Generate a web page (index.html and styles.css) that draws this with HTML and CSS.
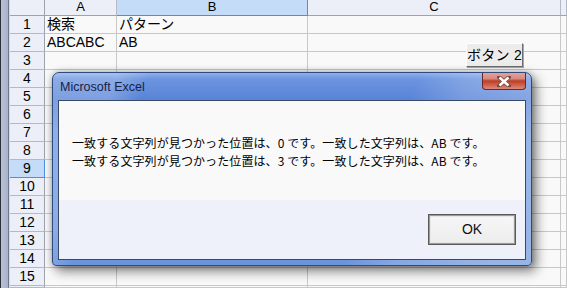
FILE: index.html
```html
<!DOCTYPE html>
<html lang="ja">
<head>
<meta charset="utf-8">
<title>Excel</title>
<link rel="stylesheet" href="styles.css">
</head>
<body>
<div class="sheet">
  <div class="strip"></div>
  <div class="hc corner"></div><div class="hc">A</div><div class="hc sel">B</div><div class="hc">C</div><div class="hc"></div>
  <div class="rh">1</div><div class="c">検索</div><div class="c">パターン</div><div class="c"></div><div class="c"></div>
  <div class="rh">2</div><div class="c">ABCABC</div><div class="c">AB</div><div class="c"></div><div class="c"></div>
  <div class="rh">3</div><div class="c"></div><div class="c"></div><div class="c"></div><div class="c"></div>
  <div class="rh">4</div><div class="c"></div><div class="c"></div><div class="c"></div><div class="c"></div>
  <div class="rh">5</div><div class="c"></div><div class="c"></div><div class="c"></div><div class="c"></div>
  <div class="rh">6</div><div class="c"></div><div class="c"></div><div class="c"></div><div class="c"></div>
  <div class="rh">7</div><div class="c"></div><div class="c"></div><div class="c"></div><div class="c"></div>
  <div class="rh">8</div><div class="c"></div><div class="c"></div><div class="c"></div><div class="c"></div>
  <div class="rh sel">9</div><div class="c"></div><div class="c"></div><div class="c"></div><div class="c"></div>
  <div class="rh">10</div><div class="c"></div><div class="c"></div><div class="c"></div><div class="c"></div>
  <div class="rh">11</div><div class="c"></div><div class="c"></div><div class="c"></div><div class="c"></div>
  <div class="rh">12</div><div class="c"></div><div class="c"></div><div class="c"></div><div class="c"></div>
  <div class="rh">13</div><div class="c"></div><div class="c"></div><div class="c"></div><div class="c"></div>
  <div class="rh">14</div><div class="c"></div><div class="c"></div><div class="c"></div><div class="c"></div>
  <div class="rh">15</div><div class="c"></div><div class="c"></div><div class="c"></div><div class="c"></div>
  <div class="rh"></div><div class="c"></div><div class="c"></div><div class="c"></div><div class="c"></div>
</div>

<div class="formbtn">ボタン 2</div>

<div class="dialog">
  <div class="titlebar">
    <span class="title">Microsoft Excel</span>
    <div class="close">
      <svg width="14" height="11" viewBox="0 0 14 11"><path d="M2 1 L12 10 M12 1 L2 10" stroke="#7a4a40" stroke-width="4" stroke-linecap="square"/><path d="M2.5 1.5 L11.5 9.5 M11.5 1.5 L2.5 9.5" stroke="#ffffff" stroke-width="2.4"/></svg>
    </div>
  </div>
  <div class="client">
    <div class="message">
      <div>一致する文字列が見つかった位置は、0 です。一致した文字列は、AB です。</div>
      <div>一致する文字列が見つかった位置は、3 です。一致した文字列は、AB です。</div>
    </div>
    <div class="buttons">
      <div class="okbtn">OK</div>
    </div>
  </div>
</div>
</body>
</html>
```
FILE: styles.css
```css
html, body {
  margin: 0;
  padding: 0;
  width: 567px;
  height: 288px;
  overflow: hidden;
  background: #f8f8f8;
}

body {
  position: relative;
  font-family: "Liberation Sans", "Noto Sans CJK JP", sans-serif;
  color: #000;
}

.sheet {
  display: grid;
  grid-template-columns: 10px 35px 72px 191px 253px 1fr;
  grid-template-rows: 16px repeat(15, 18px) 1fr;
  width: 567px;
  height: 288px;
  background: #f9f9f9;
}

.strip {
  grid-row: 1 / -1;
  grid-column: 1;
  background: linear-gradient(to right, #2a2f3a 0, #2a2f3a 1px, #b9c2d6 1px, #a9b3c9 8px, #6c7890 8px, #6c7890 9px, #d5dae6 9px);
}

.hc {
  box-sizing: border-box;
  background: #eceff8;
  border-right: 1px solid #b3b9c6;
  border-bottom: 1px solid #9da3ae;
  font-size: 13px;
  line-height: 14px;
  text-align: center;
}

.hc.corner {
  background: #eceff8;
  border-right: 1px solid #9da3ae;
}

.hc.sel {
  background: #c4dcf8;
  border-right: 1px solid #4a90e2;
  border-bottom: 1px solid #4a90e2;
}

.rh {
  box-sizing: border-box;
  background: #eceff8;
  border-right: 1px solid #9da3ae;
  border-bottom: 1px solid #b3b9c6;
  font-size: 14px;
  line-height: 17px;
  text-align: center;
}

.rh.sel {
  background: #c4dcf8;
  border-right: 1px solid #4a90e2;
  border-bottom: 1px solid #4a90e2;
}

.c {
  box-sizing: border-box;
  border-right: 1px solid #c8c8c8;
  border-bottom: 1px solid #c8c8c8;
  font-size: 14px;
  line-height: 17px;
  padding-left: 2px;
  white-space: nowrap;
  overflow: hidden;
}

.formbtn {
  position: absolute;
  left: 466px;
  top: 43px;
  width: 57px;
  height: 24px;
  box-sizing: border-box;
  background: #ececec;
  border: 1px solid;
  border-color: #ffffff #6e6e6e #6e6e6e #ffffff;
  box-shadow: 1px 1px 0 #a8a8a8;
  font-size: 14px;
  line-height: 22px;
  text-align: center;
  white-space: nowrap;
  letter-spacing: 0.3px;
}

.dialog {
  position: absolute;
  left: 52px;
  top: 72px;
  width: 480px;
  height: 194px;
  box-sizing: border-box;
  border: 1px solid #2f4a7e;
  border-radius: 7px 7px 4px 4px;
  padding: 0 5px 5px 5px;
  display: flex;
  flex-direction: column;
  background:
    linear-gradient(112deg, rgba(255,255,255,0.22) 0, rgba(255,255,255,0.22) 60px, rgba(255,255,255,0) 90px, rgba(255,255,255,0) 340px, rgba(255,255,255,0.18) 390px, rgba(255,255,255,0.30) 480px),
    linear-gradient(to bottom, #8fb0ee 0, #6c94df 6px, #5985d8 26px, #6e98e0 60px, #6b94dd 100%);
  box-shadow: 4px 5px 12px rgba(0,0,0,0.5), 0 0 6px rgba(0,0,0,0.25);
}

.titlebar {
  position: relative;
  height: 27px;
  display: flex;
  align-items: center;
  flex: none;
}

.title {
  padding-left: 2px;
  font-family: "Liberation Sans", sans-serif;
  font-size: 12.5px;
  color: #16224a;
}

.close {
  position: absolute;
  right: 0;
  top: 0;
  width: 44px;
  height: 17px;
  box-sizing: border-box;
  border: 1px solid #6a2a22;
  border-top: none;
  border-radius: 0 0 4px 4px;
  background: linear-gradient(to bottom, #e4a198 0, #d98a80 35%, #b8402c 50%, #c65036 62%, #e0877a 100%);
  display: flex;
  align-items: center;
  justify-content: center;
}

.client {
  flex: 1;
  display: flex;
  flex-direction: column;
  border: 1px solid #3a4868;
  background: #f9f9f9;
}

.message {
  height: 99px;
  box-sizing: border-box;
  padding: 33px 0 0 13px;
  background: #f9f9f9;
  font-family: "Noto Sans CJK JP", sans-serif;
  font-size: 12px;
  line-height: 18px;
  color: #000;
  white-space: nowrap;
  letter-spacing: 0.1px;
}

.buttons {
  flex: 1;
  background: #eef1f9;
  display: flex;
  justify-content: flex-end;
  align-items: center;
  padding-right: 9px;
}

.okbtn {
  width: 88px;
  height: 31px;
  box-sizing: border-box;
  border: 1px solid #5a5a5a;
  box-shadow: inset 0 0 0 1px #9a9a9a, inset 0 0 0 2px #e6e6e6;
  background: linear-gradient(to bottom, #f7f7f7, #ececec);
  font-family: "Liberation Sans", sans-serif;
  font-size: 14px;
  line-height: 29px;
  text-align: center;
  color: #111;
}
```
